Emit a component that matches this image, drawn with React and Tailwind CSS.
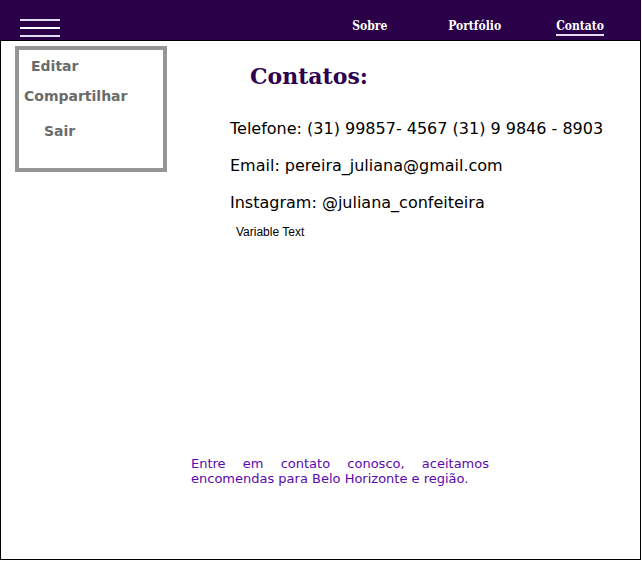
import React from "react";

export default function App() {
  return (
    <div className="w-[642px] h-[561px] bg-white">
      <div className="w-[641px] h-[560px] border border-black flex flex-col relative">
        {/* header */}
        <header className="h-[41px] -mx-px -mt-px bg-[#2a0049] border-b border-black flex items-start">
          <div className="ml-[20px] mt-[19px] w-[40px] flex flex-col gap-[6px]">
            <span className="block h-[2px] bg-[#e4dcef]" />
            <span className="block h-[2px] bg-white" />
            <span className="block h-[2px] bg-[#e4dcef]" />
          </div>
          <nav className="ml-auto mr-[37px] mt-[18px] flex items-start font-['DejaVu_Serif_Condensed','DejaVu_Serif',serif] text-[12px] leading-[16px] font-bold text-white">
            <a className="w-[96px]">Sobre</a>
            <a className="w-[108px]">Portfólio</a>
            <a className="border-b-2 border-[#e4dcef]">Contato</a>
          </nav>
        </header>

        <div className="flex flex-1">
          {/* side menu */}
          <div className="mt-[5px] ml-[14px] w-[152px] h-[126px] border-4 border-[#959595] font-['DejaVu_Sans',sans-serif] text-[14px] leading-[16px] font-bold text-[#6b6b6b]">
            <p className="ml-[12px] mt-[8px]">Editar</p>
            <p className="ml-[5px] mt-[14px]">Compartilhar</p>
            <p className="ml-[25px] mt-[19px]">Sair</p>
          </div>

          {/* contacts */}
          <div className="ml-[63px] flex-1">
            <h1 className="ml-[20px] mt-[19px] font-['DejaVu_Serif',serif] text-[22px] leading-[33px] font-bold text-[#2d0050]">
              Contatos:
            </h1>
            <div className="mt-[26px] font-['DejaVu_Sans',sans-serif] text-[16px] leading-[19px] text-black flex flex-col gap-[18px]">
              <p>Telefone: (31) 99857- 4567 (31) 9 9846 - 8903</p>
              <p>Email: pereira_juliana@gmail.com</p>
              <p>Instagram: @juliana_confeiteira</p>
            </div>
            <p className="ml-[6px] mt-[11px] font-['Liberation_Sans',sans-serif] text-[12px] leading-[18px]">
              Variable Text
            </p>
          </div>
        </div>

        <p className="absolute left-[190px] top-[455px] w-[298px] font-['DejaVu_Sans',sans-serif] text-[13px] leading-[15px] text-[#5b0aad] text-justify">
          Entre em contato conosco, aceitamos encomendas para Belo Horizonte e região.
        </p>
      </div>
    </div>
  );
}
